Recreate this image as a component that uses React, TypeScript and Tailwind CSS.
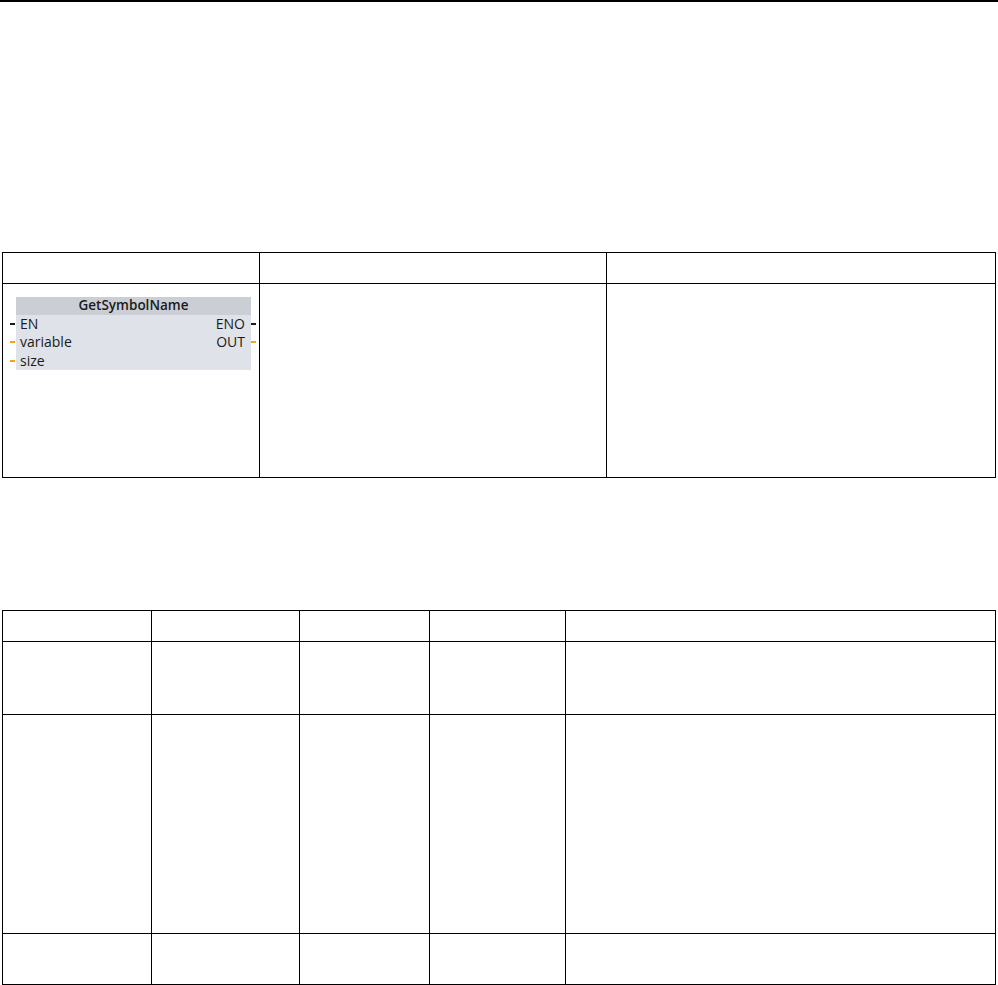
import React from "react";

type TPin = { label: string; wire: "bool" | "data" };

const LEFT_PINS: TPin[] = [
  { label: "EN", wire: "bool" },
  { label: "variable", wire: "data" },
  { label: "size", wire: "data" },
];

const RIGHT_PINS: (TPin | null)[] = [
  { label: "ENO", wire: "bool" },
  { label: "OUT", wire: "data" },
  null,
];

const ROW_HEIGHTS = ["h-[18px]", "h-[18px]", "h-[19px]"];

function Stub({ wire }: { wire: TPin["wire"] }) {
  return (
    <span
      className={
        wire === "bool"
          ? "block h-[2px] w-[5px] shrink-0 bg-[#1a1a1a]"
          : "block h-[2px] w-[5px] shrink-0 bg-[#f5a31a]"
      }
      aria-hidden
    />
  );
}

function FunctionBlock() {
  return (
    <div className="w-[235px] bg-[#dfe2e8] text-[14px] leading-none font-medium text-[#1b1b1b] [font-family:'Open_Sans',Roboto,sans-serif]">
      <div className="flex h-[18px] items-center justify-center bg-[#cbced4] text-[13.5px] font-semibold">
        GetSymbolName
      </div>
      {LEFT_PINS.map((pin, i) => {
        const right = RIGHT_PINS[i];
        return (
          <div key={pin.label} className={`flex items-center justify-between ${ROW_HEIGHTS[i]}`}>
            <div className="-ml-[6px] flex items-center gap-[1px]">
              <Stub wire={pin.wire} />
              <span className="pl-[4px]">{pin.label}</span>
            </div>
            {right ? (
              <div className="-mr-[5px] flex items-center gap-[1px]">
                <span className="pr-[5px]">{right.label}</span>
                <Stub wire={right.wire} />
              </div>
            ) : null}
          </div>
        );
      })}
    </div>
  );
}

export default function App() {
  return (
    <div className="min-h-[985px] w-[998px] bg-white">
      <div className="h-[2px] w-full bg-black" />

      {/* block overview table */}
      <div className="ml-[2px] mt-[250px] w-[994px] border-l border-t border-black">
        <div className="grid grid-cols-[257px_347px_389px]">
          <div className="h-[31px] border-b border-r border-black" />
          <div className="h-[31px] border-b border-r border-black" />
          <div className="h-[31px] border-b border-r border-black" />
          <div className="h-[194px] border-b border-r border-black pl-[13px] pt-[13px]">
            <FunctionBlock />
          </div>
          <div className="h-[194px] border-b border-r border-black" />
          <div className="h-[194px] border-b border-r border-black" />
        </div>
      </div>

      {/* parameter table */}
      <div className="ml-[2px] mt-[132px] w-[994px] border-l border-t border-black">
        <div className="grid grid-cols-[149px_148px_130px_136px_430px]">
          {["h-[31px]", "h-[73px]", "h-[219px]", "h-[51px]"].map((h) =>
            [0, 1, 2, 3, 4].map((c) => (
              <div key={`${h}-${c}`} className={`${h} border-b border-r border-black`} />
            )),
          )}
        </div>
      </div>
    </div>
  );
}
